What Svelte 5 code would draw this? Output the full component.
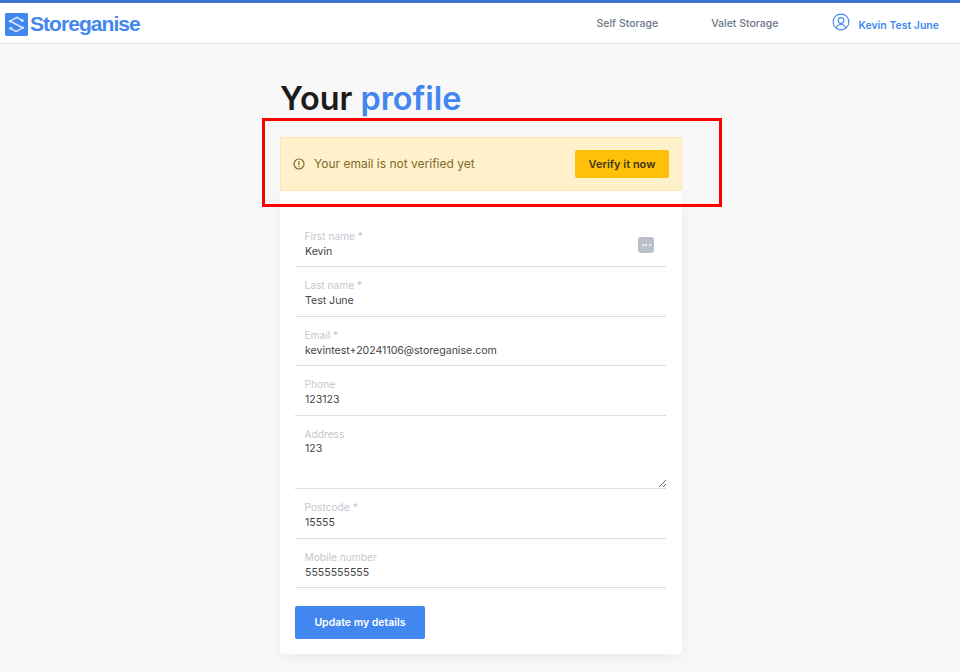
<script>
	const fields = [
		{ label: 'First name *', value: 'Kevin', icon: true },
		{ label: 'Last name *', value: 'Test June' },
		{ label: 'Email *', value: 'kevintest+20241106@storeganise.com' },
		{ label: 'Phone', value: '123123' },
		{ label: 'Address', value: '123', multiline: true },
		{ label: 'Postcode *', value: '15555' },
		{ label: 'Mobile number', value: '5555555555' }
	];
</script>

<div class="page">
	<header class="topbar">
		<a class="brand" href="#top">
			<svg class="brand-icon" viewBox="0 0 24 24" aria-hidden="true">
				<rect width="24" height="24" rx="1.5" fill="#4287f0" />
				<path d="M18 8L12.500 4.500L5.500 8.500L12 12L18.500 15.500L11.500 19.500L6 16" fill="none" stroke="#dbe8fc" stroke-width="1.6" />
				<circle cx="18" cy="8" r="1.5" fill="#dbe8fc" />
				<circle cx="5.500" cy="8.500" r="1.500" fill="#dbe8fc" />
				<circle cx="18.500" cy="15.500" r="1.500" fill="#dbe8fc" />
				<circle cx="6" cy="16" r="1.500" fill="#dbe8fc" />
			</svg>
			<span>Storeganise</span>
		</a>
		<nav class="nav">
			<a href="#self">Self Storage</a>
			<a href="#valet">Valet Storage</a>
			<a class="user" href="#user">
				<svg viewBox="0 0 24 24" fill="none" stroke="currentColor" stroke-width="1.5" aria-hidden="true">
					<circle cx="12" cy="12" r="10.500" />
					<circle cx="12" cy="10" r="3.800" />
					<path d="M5.500 20c1-3.200 3.400-4.700 6.500-4.700s5.500 1.500 6.500 4.700" />
				</svg>
				<span>Kevin Test June</span>
			</a>
		</nav>
	</header>

	<main class="content">
		<h1>Your <span>profile</span></h1>

		<div class="highlight"></div>

		<div class="alert">
			<div class="alert-text">
				<svg viewBox="0 0 24 24" fill="none" stroke="currentColor" stroke-width="2.400" aria-hidden="true">
					<circle cx="12" cy="12" r="10" />
					<path d="M12 6v8M12 16v2.500" />
				</svg>
				<span>Your email is not verified yet</span>
			</div>
			<button class="verify">Verify it now</button>
		</div>

		<form class="card">
			{#each fields as field}
				<label class="field" class:tall={field.multiline}>
					<span class="label">{field.label}</span>
					{#if field.multiline}
						<textarea readonly value={field.value}></textarea>
					{:else}
						<input readonly value={field.value} />
					{/if}
					{#if field.icon}
						<span class="pw-icon"><i></i><i></i><i></i></span>
					{/if}
				</label>
			{/each}
			<button class="submit" type="button">Update my details</button>
		</form>
	</main>
</div>

<style>
	:global(body) {
		background: #f8f8f8;
		font-family: Inter, 'Liberation Sans', sans-serif;
		overflow: hidden;
	}

	.page {
		height: 672px;
		overflow: hidden;
	}

	.topbar {
		box-sizing: border-box;
		height: 44px;
		background: #fff;
		border-top: 3px solid #3a76cc;
		border-bottom: 1px solid #dedede;
		display: flex;
		justify-content: space-between;
		padding: 0 21px 0 5px;
	}

	.brand {
		display: flex;
		align-items: center;
		gap: 2px;
		height: 40px;
		padding-top: 2px;
		box-sizing: border-box;
		text-decoration: none;
		color: #4287f0;
		font-family: 'Liberation Sans', sans-serif;
		font-weight: 700;
		font-size: 21px;
		letter-spacing: -0.95px;
	}

	.brand-icon {
		width: 23px;
		height: 23px;
	}

	.nav {
		display: flex;
		align-items: center;
		height: 40px;
		font-size: 10.500px;
	}

	.nav a {
		text-decoration: none;
		color: #6b7686;
		margin-right: 53px;
		font-weight: 500;
	}

	.nav a.user {
		margin-right: 0;
		margin-left: 1px;
		display: flex;
		align-items: center;
		gap: 8px;
		color: #4287f0;
		font-weight: 600;
	}

	.user svg {
		width: 18px;
		height: 18px;
		margin-top: -3px;
	}

	.user span {
		margin-top: 4px;
	}

	.content {
		position: relative;
		width: 402px;
		margin-left: 280px;
	}

	h1 {
		margin: 0;
		padding-top: 34px;
		height: 59px;
		font-size: 32.400px;
		line-height: 42px;
		font-weight: 600;
		color: #1c1c1c;
	}

	h1 span {
		color: #4287f0;
	}

	.highlight {
		box-sizing: border-box;
		position: absolute;
		left: -18px;
		top: 73.500px;
		width: 460px;
		height: 89px;
		border: 3px solid #f00;
		z-index: 2;
	}

	.alert {
		box-sizing: border-box;
		height: 54px;
		background: #fff1cc;
		border: 1px solid #ffe8ac;
		border-radius: 2px;
		display: flex;
		align-items: center;
		justify-content: space-between;
		padding: 0 12px;
		position: relative;
		z-index: 1;
	}

	.alert-text {
		display: flex;
		align-items: center;
		gap: 9px;
		padding-bottom: 1px;
		color: #826a29;
		font-size: 12px;
	}

	.alert-text svg {
		width: 12px;
		height: 12px;
	}

	.verify {
		width: 94px;
		height: 28px;
		border: 0;
		border-radius: 2px;
		background: #ffc107;
		color: #3d3520;
		padding-bottom: 1px;
		font: 600 11px Inter, sans-serif;
	}

	.card {
		box-sizing: border-box;
		height: 463px;
		background: #fff;
		border-radius: 0 0 4px 4px;
		box-shadow: 0 4px 16px rgba(0, 0, 0, 0.05);
		padding: 26.500px 16px 0 15px;
		display: flex;
		flex-direction: column;
	}

	.field {
		box-sizing: border-box;
		position: relative;
		display: flex;
		flex-direction: column;
		height: 49.500px;
		padding: 12.250px 0 0 9.500px;
		border-bottom: 1px solid #dedede;
	}

	.field.tall {
		height: 73.500px;
	}

	.label {
		font-size: 10.200px;
		line-height: 13px;
		color: #c3c7ce;
	}

	input,
	textarea {
		padding: 0;
		margin: 1px 0 0 0.500px;
		border: 0;
		outline: 0;
		background: transparent;
		font: 400 10.550px/15px Inter, sans-serif;
		color: #444;
		width: 100%;
	}

	input {
		height: 15px;
	}

	textarea {
		box-sizing: border-box;
		flex: 1;
		resize: vertical;
		margin-top: 0;
	}

	.pw-icon {
		position: absolute;
		right: 12px;
		top: 19px;
		width: 16px;
		height: 16px;
		border-radius: 3px;
		background: #b9bfcb;
		display: flex;
		align-items: center;
		justify-content: center;
		gap: 1.500px;
	}

	.pw-icon i {
		width: 2px;
		height: 2px;
		border-radius: 50%;
		background: #fff;
	}

	.submit {
		flex: none;
		width: 130px;
		height: 33px;
		margin-top: 18px;
		border: 0;
		border-radius: 2px;
		background: #4287f0;
		color: #fff;
		font: 600 10.500px Inter, sans-serif;
	}
</style>
